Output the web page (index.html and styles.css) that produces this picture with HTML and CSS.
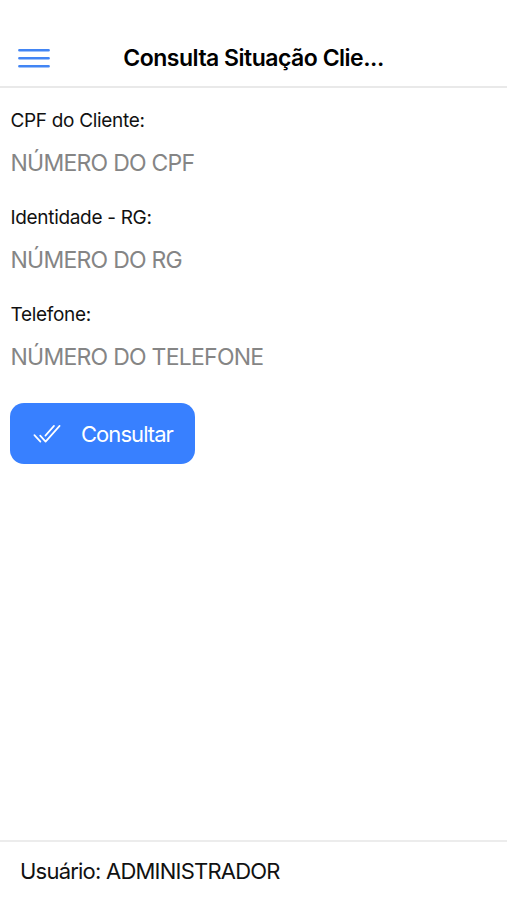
FILE: index.html
```html
<!DOCTYPE html>
<html lang="pt-BR">
<head>
<meta charset="utf-8">
<title>Consulta Situação Cliente</title>
<link rel="stylesheet" href="styles.css">
</head>
<body>
<header class="header">
  <button class="menu" aria-label="Menu"><svg width="32" height="20" viewBox="0 0 32 20"><path d="M1.4 2.2H30.6M1.4 10.2H30.6M1.4 18.2H30.6"/></svg></button>
  <h1 class="title"><span class="title-text">Consulta Situação Clie...</span></h1>
</header>
<main class="content">
  <label class="field"><span class="label">CPF do Cliente:</span><input class="input" placeholder="NÚMERO DO CPF"></label>
  <label class="field"><span class="label">Identidade - RG:</span><input class="input" placeholder="NÚMERO DO RG"></label>
  <label class="field"><span class="label">Telefone:</span><input class="input" placeholder="NÚMERO DO TELEFONE"></label>
  <button class="submit"><svg width="28" height="20" viewBox="0 0 28 20"><path d="M1.4 11.2L7.4 17.6M7.2 11.6L12.6 17.6L26.6 1.9M21 1.9L12.4 11.6"/></svg><span class="submit-text">Consultar</span></button>
</main>
<footer class="footer"><span class="user">Usuário: ADMINISTRADOR</span></footer>
</body>
</html>
```
FILE: styles.css
```css
* { box-sizing: border-box; }
body { margin: 0; height: 900px; display: flex; flex-direction: column; background: #fff; color: #000; font-family: Inter, "Liberation Sans", sans-serif; overflow: hidden; }
button { border: 0; background: none; padding: 0; font: inherit; }
svg { display: block; fill: none; stroke-linecap: round; stroke-linejoin: round; }
.header { height: 88px; padding: 30px 18px 0; border-bottom: 2px solid #e9e9e9; display: grid; grid-template-columns: 32px 1fr 32px; align-items: center; }
.menu svg { stroke: #4285f4; stroke-width: 2.6; }
.title { margin: 0; text-align: center; font-size: 23px; font-weight: 600; line-height: 30px; white-space: nowrap; letter-spacing: -0.5px; }
.content { flex: 1; padding: 19px 10px; }
.field { display: block; height: 97px; padding-left: 0.5px; }
.label { display: block; color: #111; font-size: 19px; line-height: 28px; letter-spacing: -0.32px; }
.input { display: block; width: 100%; height: 40px; margin-top: 8px; padding: 0; border: 0; outline: 0; background: none; color: #000; font: 23px Inter, sans-serif; letter-spacing: -0.75px; }
.input::placeholder { color: #858585; opacity: 1; }
.submit { display: flex; align-items: center; width: 185px; height: 61px; margin-top: 5px; padding-left: 23px; gap: 20px; border-radius: 14px; background: #3880ff; color: #fff; font-size: 22px; letter-spacing: -0.95px; }
.submit svg { stroke: #fff; stroke-width: 1.7; }
.footer { height: 60px; padding: 14px 20px; border-top: 2px solid #ececec; color: #111; font-size: 22px; line-height: 30px; letter-spacing: -0.78px; }
```
